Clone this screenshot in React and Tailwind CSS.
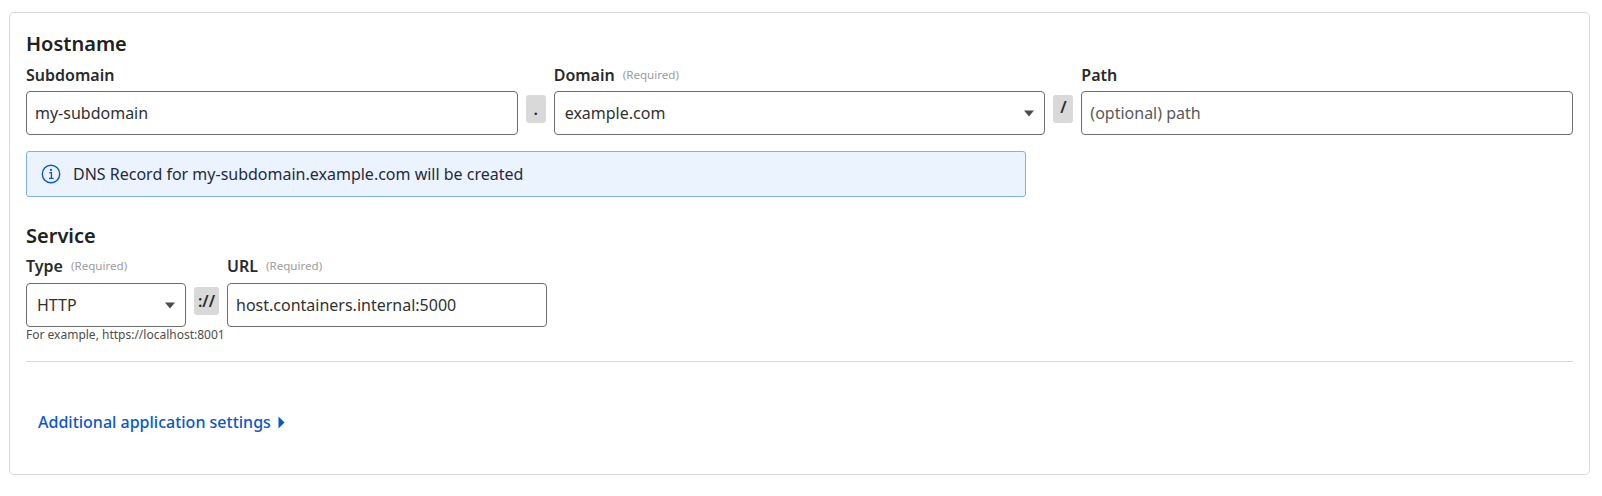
import React from "react";

const F = "font-['Noto_Sans',sans-serif]";
const Req = () => <span className="ml-2 text-[11.6px] font-normal leading-none text-[#9c9c9c]">(Required)</span>;
const Label = ({ children, req }) => (
  <div className="flex h-[24px] items-center text-[16px] font-semibold leading-[24px] text-[#2a2a2a]">
    {children}{req && <Req />}
  </div>
);
const Sep = ({ children, w }) => (
  <div className={`flex h-[28px] shrink-0 items-center justify-center rounded-[3px] bg-[#d9d9d9] text-[16px] font-semibold leading-[24px] text-[#2a2a2a] ${w}`}>{children}</div>
);
const Caret = () => (
  <svg width="12" height="7" viewBox="0 0 12 7" className="shrink-0"><path d="M1 0.5h10L6 6.5z" fill="#4d4d4d" /></svg>
);
const boxCls = "flex h-[44px] items-center rounded-[4px] border border-[#6e6e6e] bg-white text-[16px] text-[#313131]";

export default function App() {
  return (
    <div className={`${F} pl-[9px] pr-[12px] pt-[12px] pb-[21px]`}>
      <div className="rounded-[5px] border border-[#d9d9d9] bg-white px-[16px] pb-[12px] pt-[17px]">
        <h2 className="text-[20px] font-semibold leading-[28px] text-[#212121]">Hostname</h2>
        <div className="mt-[5px] flex">
          <div className="flex-1">
            <Label>Subdomain</Label>
            <div className={`${boxCls} mt-[4px] px-[8px]`}>my-subdomain</div>
          </div>
          <Sep w="mx-[8px] mt-[32px] w-[20px] pb-[1px]">.</Sep>
          <div className="flex-1">
            <Label req>Domain</Label>
            <div className={`${boxCls} mt-[4px] justify-between pl-[10px] pr-[9px]`}>example.com<Caret /></div>
          </div>
          <Sep w="mx-[8px] mt-[32px] w-[20px] pb-[4px]">/</Sep>
          <div className="flex-1">
            <Label>Path</Label>
            <div className={`${boxCls} mt-[4px] px-[8px] text-[#595959]`}>(optional) path</div>
          </div>
        </div>
        <div className="mt-[16px] flex h-[46px] w-[1000px] items-center rounded-[3px] border border-[#7eb0f5] bg-[#ebf3fe] pl-[14px] text-[16px] text-[#1f2b3d]">
          <svg width="20" height="20" viewBox="0 0 20 20" fill="none" className="mr-[12px] shrink-0">
            <circle cx="10" cy="10" r="8.7" stroke="#0b57c9" strokeWidth="1.4" />
            <path d="M8.2 8.7H10.4V14.2M8 14.4H12.6" stroke="#0b57c9" strokeWidth="1.3" />
            <circle cx="10" cy="5.9" r="1.1" fill="#0b57c9" />
          </svg>
          DNS Record for my-subdomain.example.com will be created
        </div>
        <h2 className="mt-[25px] text-[20px] font-semibold leading-[28px] text-[#212121]">Service</h2>
        <div className="mt-[4px] flex">
          <div className="w-[160px]">
            <Label req>Type</Label>
            <div className={`${boxCls} mt-[5px] justify-between pl-[10px] pr-[9px]`}>HTTP<Caret /></div>
          </div>
          <Sep w="mx-[8px] mt-[33px] w-[25px] pb-[1px]">://</Sep>
          <div className="w-[320px]">
            <Label req>URL</Label>
            <div className={`${boxCls} mt-[5px] border-[#5c6b82] px-[8px]`}>host.containers.internal:5000</div>
          </div>
        </div>
        <div className="whitespace-nowrap text-[12px] leading-[16px] text-[#4d4d4d]">For example, https://localhost:8001</div>
        <div className="mt-[18px] border-t border-[#d9d9d9]" />
        <div className="flex items-center gap-[7px] pl-[12px] pt-[50px] pb-[30px] text-[16px] font-medium leading-[20px] text-[#0b57c9]">
          Additional application settings
          <svg width="7" height="13" viewBox="0 0 7 13"><path d="M0.5 0.5L6.5 6.5L0.5 12.5z" fill="#0b57c9" /></svg>
        </div>
      </div>
    </div>
  );
}
